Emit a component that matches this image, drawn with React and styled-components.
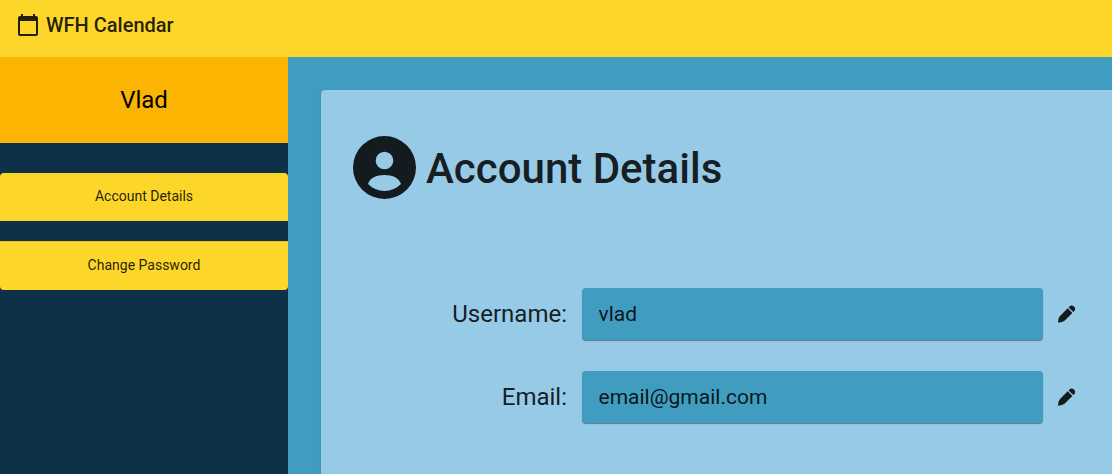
import React from "react";
import styled, { createGlobalStyle } from "styled-components";

const GlobalStyle = createGlobalStyle`
  * { box-sizing: border-box; }
  body { margin: 0; overflow: hidden; font-family: Roboto, sans-serif; color: rgba(0, 0, 0, 0.87); }
  svg { display: block; flex: none; fill: #131b1f; }
`;

const Page = styled.div`
  display: flex;
  flex-direction: column;
  height: 100vh;
  overflow: hidden;
`;

const TopBar = styled.header`
  flex: none;
  height: 57px;
  padding: 12px 16px 0;
  background: #fcd629;
`;

const Brand = styled.div`
  display: flex;
  align-items: center;
  gap: 6px;
  height: 26px;
  font-size: 20px;
  font-weight: 500;
  svg { fill: #221f0c; }
`;

const Body = styled.div`
  flex: 1;
  display: flex;
  min-height: 0;
`;

const Sidebar = styled.nav`
  flex: none;
  width: 288px;
  background: #0e3149;
`;

const UserName = styled.div`
  display: flex;
  align-items: center;
  justify-content: center;
  height: 86px;
  margin-bottom: 30px;
  background: #fab401;
  color: #000;
  font-size: 24px;
`;

const NavButton = styled.button`
  display: block;
  width: 100%;
  height: ${(p) => (p.$last ? "49px" : "48px")};
  margin: 0 0 20px;
  padding: 0 0 ${(p) => (p.$last ? "3px" : "2px")};
  border: 0;
  border-top: ${(p) => (p.$last ? "1px solid #f0bd25" : "0")};
  border-radius: ${(p) => (p.$last ? "0 0 4px 4px" : "4px 4px 0 0")};
  background: #fcd629;
  color: inherit;
  font: 400 14px Roboto, sans-serif;
`;

const Main = styled.main`
  flex: 1;
  padding: 33px 0 0 33px;
  background: #409dbf;
`;

const Card = styled.section`
  height: 600px;
  padding: 46px 0 0 32px;
  border-radius: 4px 0 0 0;
  background: #96cae6;
  box-shadow: 0 1px 3px rgba(0, 0, 0, 0.12);
`;

const Heading = styled.h1`
  display: flex;
  align-items: center;
  gap: 10px;
  height: 63px;
  margin: 0 0 89px;
  font-size: 42px;
  font-weight: 500;
`;

const HeadingText = styled.span`
  padding-top: 2px;
`;

const Field = styled.div`
  display: grid;
  grid-template-columns: 214px 461px 18px;
  column-gap: 15px;
  align-items: center;
  height: 52px;
  margin-bottom: 31px;
  svg { margin-bottom: 1px; }
`;

const Label = styled.label`
  padding-bottom: 1px;
  text-align: right;
  font-size: 24px;
`;

const Value = styled.div`
  display: flex;
  align-items: center;
  height: 52px;
  padding: 0 16px 1px 16.5px;
  border-radius: 4px;
  background: #409dbf;
  box-shadow: 0 1px 1px rgba(0, 0, 0, 0.4);
  font-size: 21px;
`;

const CalendarIcon = () => (
  <svg width="24" height="24" viewBox="0 0 24 24">
    <path d="M20 3h-1V1h-2v2H7V1H5v2H4c-1.100 0-2 .9-2 2v16c0 1.100.9 2 2 2h16c1.100 0 2-.9 2-2V5c0-1.100-.9-2-2-2zm0 18H4V8h16v13z" />
  </svg>
);

const AccountIcon = () => (
  <svg width="63" height="63" viewBox="0 0 63 63">
    <path
      fillRule="evenodd"
      d="M31.500 0a31.500 31.500 0 1 1 0 63a31.500 31.500 0 1 1 0-63zM31.500 15.700a8.800 8.800 0 1 0 0 17.600a8.800 8.800 0 1 0 0-17.600zM31.500 39C23 39 17 42 15 48Q22 55 31.500 55T48 48C46 42 40 39 31.500 39z"
    />
  </svg>
);

const PencilIcon = () => (
  <svg width="18" height="18" viewBox="0 0 18 18">
    <path d="M0 17.700Q.2 13 1.800 11.200L9.700 3.300L14.400 8L6.500 15.800Q4.600 17.500 0 17.700zM10.600 2.400L11.700 1.300Q13.800-.6 16 1.600Q18.200 3.900 16.400 6L15.300 7.100z" />
  </svg>
);

const fields = [
  { label: "Username:", value: "vlad" },
  { label: "Email:", value: "email@gmail.com" },
];

export default function App() {
  return (
    <Page>
      <GlobalStyle />
      <TopBar>
        <Brand><CalendarIcon />WFH Calendar</Brand>
      </TopBar>
      <Body>
        <Sidebar>
          <UserName>Vlad</UserName>
          <NavButton>Account Details</NavButton>
          <NavButton $last>Change Password</NavButton>
        </Sidebar>
        <Main>
          <Card>
            <Heading><AccountIcon /><HeadingText>Account Details</HeadingText></Heading>
            {fields.map((f) => (
              <Field key={f.label}>
                <Label>{f.label}</Label>
                <Value>{f.value}</Value>
                <PencilIcon />
              </Field>
            ))}
          </Card>
        </Main>
      </Body>
    </Page>
  );
}
